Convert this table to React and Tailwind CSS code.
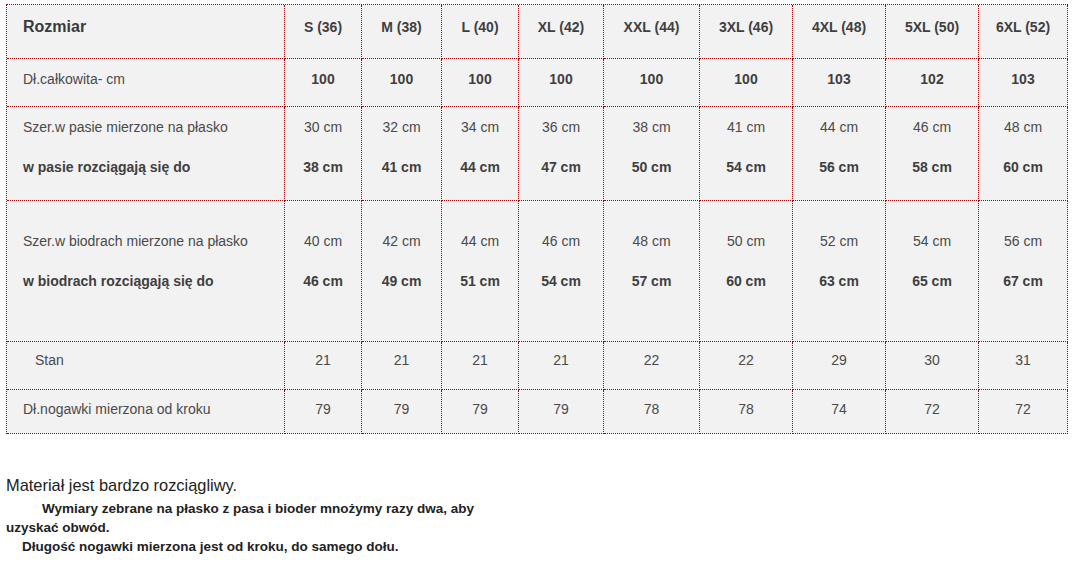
import React from "react";

const sizes = ["S (36)", "M (38)", "L (40)", "XL (42)", "XXL (44)", "3XL (46)", "4XL (48)", "5XL (50)", "6XL (52)"];
const total = ["100", "100", "100", "100", "100", "100", "103", "102", "103"];
const waistFlat = ["30 cm", "32 cm", "34 cm", "36 cm", "38 cm", "41 cm", "44 cm", "46 cm", "48 cm"];
const waistStretch = ["38 cm", "41 cm", "44 cm", "47 cm", "50 cm", "54 cm", "56 cm", "58 cm", "60 cm"];
const hipFlat = ["40 cm", "42 cm", "44 cm", "46 cm", "48 cm", "50 cm", "52 cm", "54 cm", "56 cm"];
const hipStretch = ["46 cm", "49 cm", "51 cm", "54 cm", "57 cm", "60 cm", "63 cm", "65 cm", "67 cm"];
const rise = ["21", "21", "21", "21", "22", "22", "29", "30", "31"];
const inseam = ["79", "79", "79", "79", "78", "78", "74", "72", "72"];

const cell = "border-r border-b border-dotted border-[#a80000] bg-[#f2f2f2]";

export default function App() {
  return (
    <div className="bg-white w-[1082px] h-[563px] overflow-hidden text-[#4a4a4a]" style={{ fontFamily: '"Liberation Sans", Arial, sans-serif' }}>
      <div className="ml-[6px] mt-[4px] w-[1062px] grid grid-cols-[278px_77px_80px_77px_85px_96px_93px_93px_93px_89px] grid-rows-[54px_48px_94px_141px_48px_44px] border-l border-t border-dotted border-[#a80000]">
        {/* header */}
        <div className={`${cell} pl-[16px] pt-[13px] text-[16px] leading-[18px] font-bold text-[#3a3a3a]`}>Rozmiar</div>
        {sizes.map((s) => (
          <div key={s} className={`${cell} pt-[14px] text-center text-[14px] leading-[16px] font-bold text-[#3f3f3f]`}>{s}</div>
        ))}
        {/* total length */}
        <div className={`${cell} pl-[16px] pt-[12px] text-[14px] leading-[16px]`}>Dł.całkowita- cm</div>
        {total.map((v, i) => (
          <div key={i} className={`${cell} pt-[12px] text-center text-[14px] leading-[16px] font-bold text-[#3f3f3f]`}>{v}</div>
        ))}
        {/* waist */}
        <div className={`${cell} pl-[16px] pt-[12px] flex flex-col gap-[24px] text-[14px] leading-[16px]`}>
          <span>Szer.w pasie mierzone na płasko</span>
          <span className="font-bold text-[#3f3f3f]">w pasie rozciągają się do</span>
        </div>
        {waistFlat.map((v, i) => (
          <div key={i} className={`${cell} pt-[12px] flex flex-col gap-[24px] items-center text-[14px] leading-[16px]`}>
            <span>{v}</span>
            <span className="font-bold text-[#3f3f3f]">{waistStretch[i]}</span>
          </div>
        ))}
        {/* hips */}
        <div className={`${cell} pl-[16px] pt-[32px] flex flex-col gap-[24px] text-[14px] leading-[16px]`}>
          <span>Szer.w biodrach mierzone na płasko</span>
          <span className="font-bold text-[#3f3f3f]">w biodrach rozciągają się do</span>
        </div>
        {hipFlat.map((v, i) => (
          <div key={i} className={`${cell} pt-[32px] flex flex-col gap-[24px] items-center text-[14px] leading-[16px]`}>
            <span>{v}</span>
            <span className="font-bold text-[#3f3f3f]">{hipStretch[i]}</span>
          </div>
        ))}
        {/* rise */}
        <div className={`${cell} pl-[28px] pt-[10px] text-[14px] leading-[16px]`}>Stan</div>
        {rise.map((v, i) => (
          <div key={i} className={`${cell} pt-[10px] text-center text-[14px] leading-[16px]`}>{v}</div>
        ))}
        {/* inseam */}
        <div className={`${cell} pl-[16px] pt-[11px] text-[14px] leading-[16px]`}>Dł.nogawki mierzona od kroku</div>
        {inseam.map((v, i) => (
          <div key={i} className={`${cell} pt-[11px] text-center text-[14px] leading-[16px]`}>{v}</div>
        ))}
      </div>

      <div className="mt-[41px] pl-[6px] text-[#222]">
        <div className="text-[16.4px] leading-[20px]">Materiał jest bardzo rozciągliwy.</div>
        <div className="mt-[5px] text-[13.5px] leading-[18.5px] font-bold">
          <div className="pl-[36px]">Wymiary zebrane na płasko z pasa i bioder mnożymy razy dwa, aby</div>
          <div>uzyskać obwód.</div>
          <div className="pl-[16px] mt-[1px]">Długość nogawki mierzona jest od kroku, do samego dołu.</div>
        </div>
      </div>
    </div>
  );
}
